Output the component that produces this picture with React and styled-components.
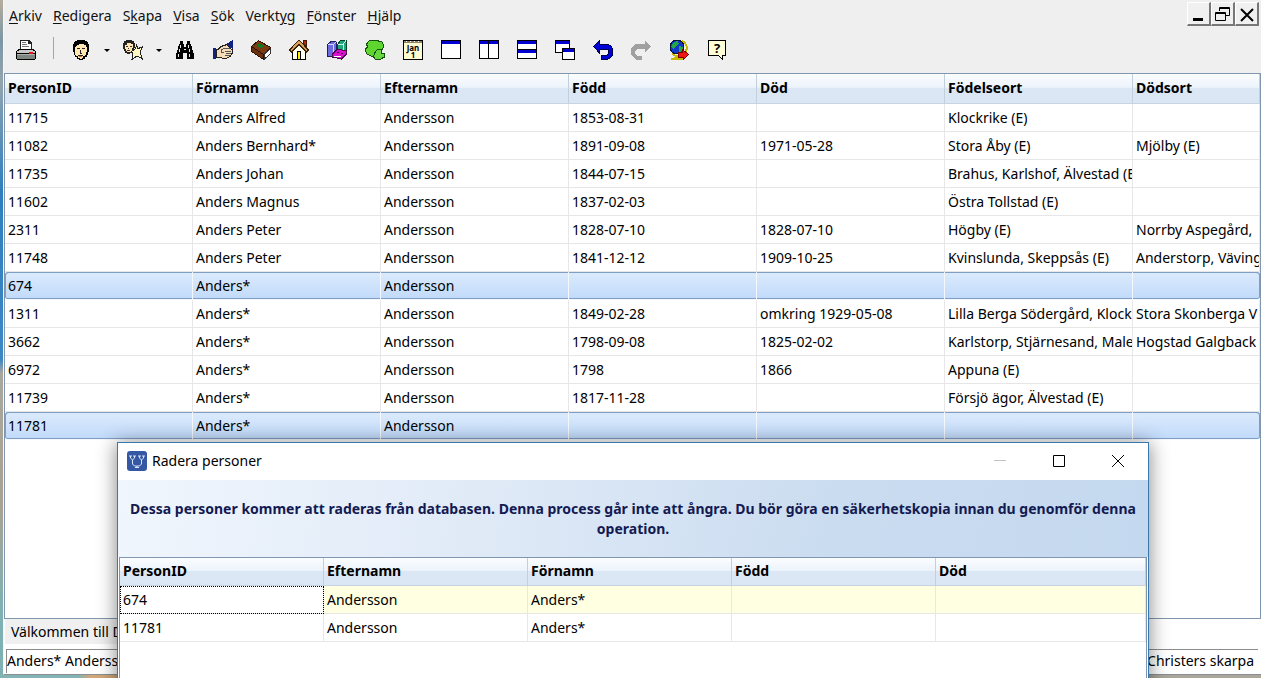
import React from "react";
import styled, { createGlobalStyle } from "styled-components";

const GlobalStyle = createGlobalStyle`
  * {
    box-sizing: border-box;
  }

  body {
    margin: 0;
    overflow: hidden;
    color: #000;
    font-family: "Noto Sans", "Open Sans", sans-serif;
    font-size: 14px;
    line-height: 20px;
  }

  button {
    margin: 0;
    padding: 0;
    border: 0;
    background: none;
    color: inherit;
    font: inherit;
  }
`;

const Desktop = styled.div`
  position: relative;
  height: 100vh;
  overflow: hidden;
  padding: 0 0 3px 3px;
  background:
    linear-gradient(90deg, #83b3b4 0 78px, #d2a679 90px 118px, #a9a69c 130px) bottom / 100% 4px no-repeat,
    linear-gradient(#b5ad9c 0, #7c96a6 6%, #93a4ae 12%, #2f7fc0 28%, #3d87c4 53%, #a9a69c 55%, #a8a294 75%, #7fb0b2 90%);
`;

const Window = styled.div`
  display: flex;
  flex-direction: column;
  height: 100%;
  border-left: 1px solid #f4f6f8;
  border-bottom: 1px solid #8a8f92;
  background: #fff;
`;

const Chrome = styled.header`
  padding-bottom: 5px;
  background: #efefef;
`;

const MenuRow = styled.div`
  display: flex;
  align-items: center;
  justify-content: space-between;
  height: 32px;
  padding: 0 2px 0 5px;
`;

const Menu = styled.nav`
  display: flex;
  gap: 11px;
`;

const MenuButton = styled.button`
  color: #111;

  u {
    text-underline-offset: 2px;
  }
`;

const MdiButtons = styled.div`
  display: flex;
  align-self: flex-start;
  padding-top: 2px;
`;

const MdiButton = styled.button`
  display: flex;
  width: 24px;
  height: 24px;
  padding: 2px 1px;
  border: solid;
  border-width: 1px 2px 2px 1px;
  border-color: #fff #777 #777 #fff;
  background: #f0f0f0;
`;

const Toolbar = styled.div`
  display: flex;
  align-items: center;
  height: 36px;
  padding-left: 3px;
`;

const ToolButton = styled.button`
  display: flex;
  align-items: center;
  justify-content: center;
  width: ${({ $caret }) => ($caret ? "14px" : "38px")};
  height: 32px;
`;

const Separator = styled.div`
  width: 1px;
  height: 22px;
  margin: 0 8px 4px;
  background: #a5a5a5;
`;

const Caret = styled.span`
  border: 3px solid transparent;
  border-top-color: #000;
  border-bottom: 0;
`;

const GridFrame = styled.div`
  flex: 1;
  min-height: 0;
  overflow: hidden;
  border: 1px solid #8096ae;
  background: #fff;
`;

const Grid = styled.table`
  width: 100%;
  table-layout: fixed;
  border-collapse: separate;
  border-spacing: 0;
`;

const HeadCell = styled.th`
  width: ${({ $width }) => ($width ? `${$width}px` : "auto")};
  height: ${({ $height }) => $height}px;
  padding: 0 3px 1px;
  overflow: hidden;
  border-right: 1px solid #c3cfdd;
  border-bottom: 1px solid #c8d4e2;
  background: linear-gradient(#fbfdff 0%, #ecf3fb 46%, #dce7f5 50%, #dbe6f4 100%);
  font-weight: 700;
  text-align: left;
  white-space: nowrap;
`;

const Cell = styled.td`
  height: 28px;
  padding: 0 0 0 3px;
  overflow: hidden;
  border-right: 1px solid #e9e6e9;
  border-bottom: 1px solid #e6e6e6;
  white-space: nowrap;
`;

const Row = styled.tr`
  ${({ $selected }) =>
    $selected &&
    `
    ${Cell} {
      border-color: #f4f7fb;
      background: linear-gradient(#dcebfc, #c1dafb) padding-box;
      box-shadow: inset 0 1px #7f9ec6, inset 0 -1px #7f9ec6;
    }

    ${Cell}:first-child {
      border-radius: 3px 0 0 3px;
      box-shadow: inset 1px 1px #7f9ec6, inset 0 -1px #7f9ec6;
    }

    ${Cell}:last-child {
      border-right: 0;
      border-radius: 0 3px 3px 0;
      box-shadow: inset -1px 1px #7f9ec6, inset 0 -1px #7f9ec6;
    }
  `}

  ${({ $focused }) =>
    $focused &&
    `
    ${Cell} {
      background: #ffffe1;
    }

    ${Cell}:first-child {
      background: #fff;
      outline: 1px dotted #000;
      outline-offset: -1px;
    }
  `}
`;

const StatusTop = styled.div`
  display: flex;
  height: 30px;
  padding: 0 0 5px 1px;
`;

const StatusMessage = styled.div`
  width: 400px;
  padding: 3px 6px;
  background: #f0f0f0;
`;

const StatusBottom = styled.div`
  display: flex;
  justify-content: space-between;
  height: 24px;
  margin: 0 3px 1px 2px;
  padding: 1px 4px 0 0;
  border-top: 1px solid #8b8b8b;
  border-left: 1px solid #8b8b8b;
`;

const Dialog = styled.section`
  position: absolute;
  top: 442px;
  right: 112px;
  bottom: -60px;
  left: 117px;
  display: flex;
  flex-direction: column;
  border: 1px solid #3779ad;
  background: #fff;
  box-shadow: 0 2px 18px 1px rgba(0, 0, 0, 0.45);
`;

const TitleBar = styled.header`
  display: flex;
  align-items: center;
  height: 37px;
  padding: 0 1px 1px 9px;
`;

const Title = styled.h1`
  flex: 1;
  margin: 0 0 0 5px;
  font-size: 14px;
  font-weight: 400;
`;

const CaptionButton = styled.button`
  display: flex;
  align-items: center;
  justify-content: center;
  width: 59px;
  height: 36px;
  color: ${({ disabled }) => (disabled ? "#c4c4c4" : "#000")};
`;

const Warning = styled.p`
  margin: 0;
  padding: 19px 8px 18px;
  background: linear-gradient(100deg, #f0f6fd 0%, #e0eaf7 35%, #cadcf0 70%, #c4d8ef 100%);
  color: #131a52;
  font-weight: 700;
  text-align: center;
`;

const DialogGrid = styled.div`
  display: flex;
  flex: 1;
  padding: 0 1px;
`;

const columns = ["PersonID", "Förnamn", "Efternamn", "Född", "Död", "Födelseort", "Dödsort"];

const persons = [
  ["11715", "Anders Alfred", "Andersson", "1853-08-31", "", "Klockrike (E)", ""],
  ["11082", "Anders Bernhard*", "Andersson", "1891-09-08", "1971-05-28", "Stora Åby (E)", "Mjölby (E)"],
  ["11735", "Anders Johan", "Andersson", "1844-07-15", "", "Brahus, Karlshof, Älvestad (E", ""],
  ["11602", "Anders Magnus", "Andersson", "1837-02-03", "", "Östra Tollstad (E)", ""],
  ["2311", "Anders Peter", "Andersson", "1828-07-10", "1828-07-10", "Högby (E)", "Norrby Aspegård,"],
  ["11748", "Anders Peter", "Andersson", "1841-12-12", "1909-10-25", "Kvinslunda, Skeppsås (E)", "Anderstorp, Väving"],
  ["674", "Anders*", "Andersson", "", "", "", ""],
  ["1311", "Anders*", "Andersson", "1849-02-28", "omkring 1929-05-08", "Lilla Berga Södergård, Klock", "Stora Skonberga V"],
  ["3662", "Anders*", "Andersson", "1798-09-08", "1825-02-02", "Karlstorp, Stjärnesand, Male", "Hogstad Galgback"],
  ["6972", "Anders*", "Andersson", "1798", "1866", "Appuna (E)", ""],
  ["11739", "Anders*", "Andersson", "1817-11-28", "", "Försjö ägor, Älvestad (E)", ""],
  ["11781", "Anders*", "Andersson", "", "", "", ""],
];

const selected = ["674", "11781"];

const deleteColumns = ["PersonID", "Efternamn", "Förnamn", "Född", "Död"];

const deleteRows = [
  ["674", "Andersson", "Anders*", "", ""],
  ["11781", "Andersson", "Anders*", "", ""],
];

// [before, access key, after]
const menus = [
  ["", "A", "rkiv"],
  ["", "R", "edigera"],
  ["S", "k", "apa"],
  ["", "V", "isa"],
  ["", "S", "ök"],
  ["Verkt", "y", "g"],
  ["", "F", "önster"],
  ["", "H", "jälp"],
];

const icons = {
  print: (
    <>
      <path d="M4 9V0h9l3 3v6z" fill="#222" />
      <path d="M5 9V1h7v3h3v5z" fill="#fff" />
      <path d="M6 2h4v1H6zM6 4h5v1H6zM6 6h7v1H6z" fill="#777" />
      <path d="M2 9h16v1h1v1h1v8h-1v1H1v-1H0v-8h1v-1h1z" fill="#000" />
      <path d="M3 10h14v1h2v2H1v-2h2z" fill="#c8c8c8" />
      <path d="M1 14h18v1H1z" fill="#aab2ae" />
      <path d="M1 15h18v4H1z" fill="#7d8782" />
      <path d="M13 12h4v2h-4z" fill="#e8141c" />
    </>
  ),
  face: (
    <>
      <path d="M6 0h8v1h2v1h1v2h1v8h-1v3h-1v2h-2v2h-2v1H8v-1H6v-2H4v-2H3v-3H2V4h1V2h1V1h2z" fill="#000" />
      <path d="M6 5h2V4h5v1h2v2h1v5h-1v3h-1v1h-2v2h-1v1H9v-1H7v-2H5v-1H4V7h1V6h1z" fill="#ffe6b4" />
      <path d="M6 8h3v1H6zM11 8h3v1h-3zM9 10h1v3h1v1H9zM7 15h5v1H7z" fill="#222" />
      <path d="M8 16h3v1H8z" fill="#c46a4a" />
    </>
  ),
  faceStar: (
    <>
      <path d="M13.500 5.500l1.500 3 4.500-1.500-2.500 5 2.500 7-5.500-3-5 3.500 1-6-3-4 5-.5z" fill="#fff8c4" stroke="#222" />
      <path d="M3 0h6v1h2v2h1v5h-1v3H9v2H7v1H4v-1H2v-2H1V9H0V3h1V1h2z" fill="#222" />
      <path d="M4 3h4v1h2v4H9v3H8v1H4v-1H3V9H2V5h2z" fill="#ffe6b4" />
      <path d="M3 6h2v1H3zM7 6h2v1H7zM5 8h1v1H5zM4 10h3v1H4z" fill="#333" />
    </>
  ),
  binoculars: (
    <>
      <path d="M5 1h3v3h1v3h2V4h1V1h3v3h1v2h1v4h1v3h1v6h-7v-6H8v6H1v-6h1v-3h1V6h1V4h1z" fill="#000" />
      <path d="M5 5h1v3H5zM4 9h1v3H4zM3 14h1v3H3zM13 5h1v3h-1zM14 9h1v3h-1zM14 14h1v3h-1zM9 9h2v1H9z" fill="#e8e8e8" />
    </>
  ),
  hand: (
    <>
      <path d="M20 0v9l-3-1-4-4z" fill="#10247f" />
      <path d="M0 8h3v11H0z" fill="#10247f" />
      <path d="M3 9.500h2l3-3 6-2 3 4 2 1v4l-2 3-3 1.500H9L7 17l-3 1z" fill="#f6dcb8" stroke="#222" />
      <path d="M8 10l4-2 5 1M12 11.500h6M13 13.500h5M12 15.500h5M8 10v2h3" stroke="#555" fill="none" />
    </>
  ),
  book: (
    <>
      <path d="M.5 6.500L7.500.5l12 7-7 7z" fill="#7a3a12" stroke="#2a1204" />
      <path d="M.5 6.500l12 8v5l-12-8z" fill="#6a300c" stroke="#2a1204" />
      <path d="M13 14.500l6.500-6v5l-6.500 6z" fill="#fff" stroke="#333" />
      <path d="M7 4h3v1h3v2h-2v1H9V7H7z" fill="#0b7a22" />
    </>
  ),
  house: (
    <>
      <path d="M3.500 10L10 4l6.500 6v9.500h-13z" fill="#fffff0" stroke="#000" />
      <path d="M14 0h3v6l-3-3z" fill="#b02a10" stroke="#4a1505" />
      <path d="M.5 10L9.500.5h1l9 9.500-2 2L10 4.500 2.500 12z" fill="#d7a05a" stroke="#3b2108" />
      <path d="M8.500 19.500v-8h3v8z" fill="#fff000" stroke="#000" />
    </>
  ),
  books: (
    <>
      <path d="M.5 4.500L4 1.500h5.500v12l-3 3h-6z" fill="#6c6ce0" stroke="#20205c" />
      <path d="M1 4.500h5.500l3-3M6.500 5v11" stroke="#d5d5ff" fill="none" />
      <path d="M10.500 4.500l3-4h5.500v11l-3 4h-5.500z" fill="#1fa77a" stroke="#07402f" />
      <path d="M11 4.500h5l3-4M16 5v9" stroke="#caf5e2" fill="none" />
      <path d="M5.500 14l5-5 9 2v3l-5 5-9-2z" fill="#d911cf" stroke="#4d0849" />
      <path d="M7 16.500h7" stroke="#fff" fill="none" />
      <path d="M10 12.500h2M14 13.500h2" stroke="#4d0849" />
    </>
  ),
  map: (
    <>
      <path d="M4.500.5h8l2 1h2l2 3v3l-2 3v3l-3 3-5 1-3-2-3-1-2-3V9l2-2-1-3z" fill="#5fd62f" stroke="#14500c" />
      <path d="M10.500 11.500l3-2.500h3v4l3 1v3l-2 1-2 1.500h-5l-2-3 1-3z" fill="#67d93f" stroke="#14500c" />
    </>
  ),
  calendar: (
    <>
      <path d="M.5 .5h19v19H.5z" fill="#fffbd0" stroke="#000" />
      <path d="M1 1h18v2H1z" fill="#8f8266" />
      <path d="M3 1h1v1H3zM7 1h1v1H7zM11 1h1v1h-1zM15 1h1v1h-1z" fill="#fff" />
      <text x="10" y="11" fontSize="8" fontWeight="700" textAnchor="middle" fill="#000">
        Jan
        <tspan x="10" dy="7">1</tspan>
      </text>
    </>
  ),
  single: (
    <>
      <path d="M.5 .5h19v18H.5z" fill="#fff" stroke="#000" />
      <path d="M1 1h18v3H1z" fill="#0000d0" />
    </>
  ),
  columns: (
    <>
      <path d="M.5 .5h19v18H.5z" fill="#fff" stroke="#000" />
      <path d="M1 1h18v3H1z" fill="#0000d0" />
      <path d="M9 1h1v18H9z" fill="#000" />
    </>
  ),
  rows: (
    <>
      <path d="M.5 .5h19v18H.5z" fill="#fff" stroke="#000" />
      <path d="M1 1h18v3H1zM1 10h18v3H1z" fill="#0000d0" />
      <path d="M1 9h18v1H1z" fill="#000" />
    </>
  ),
  cascade: (
    <>
      <path d="M.5 .5h14v12H.5z" fill="#fff" stroke="#000" />
      <path d="M1 1h13v3H1z" fill="#0000d0" />
      <path d="M7.500 8.500h12v11h-12z" fill="#fff" stroke="#000" />
      <path d="M8 9h11v3H8z" fill="#0000d0" />
    </>
  ),
  undo: (
    <path
      d="M.5 6.500l6-6v4h8l3 1 2 3v7l-3 3-3 1h-5v-4h5l2-2V10l-1-1h-8v4z"
      fill="#0000d8"
      stroke="#000048"
    />
  ),
  redo: <path d="M20 6.500L14 1v3H5L2 6 0 9v6l3 3 3 2h5v-4H6l-2-2v-3l2-2h8v4z" fill="#a0a0a0" />,
  globe: (
    <>
      <path d="M13 1l3 2 2 4-1 5-3 3-5 1v2h4v2H3v-1l4-1v-2l-4-2" fill="none" stroke="#c9b800" strokeWidth="2" />
      <circle cx="8" cy="7" r="7" fill="#1238c8" stroke="#0a1240" />
      <path d="M5 2l4-1 1 3-3 2-2 3-3-2zM10 6l4 1-1 4-3 1z" fill="#25a54a" />
      <path d="M9.500 12h4V9.500l6 5-5 5V17h-5z" fill="#f01414" stroke="#7c0000" />
    </>
  ),
  help: (
    <>
      <path d="M1.500.5h17v15l-3 .5v3.500l-4-4h-10z" fill="#ffffd8" stroke="#000" />
      <text x="10" y="13" fontSize="13" fontWeight="700" textAnchor="middle" fill="#000">
        ?
      </text>
    </>
  ),
};

const tools = [
  ["binoculars", "Sök person"],
  ["hand", "Ansedel"],
  ["book", "Källor"],
  ["house", "Orter"],
  ["books", "Arkiv"],
  ["map", "Karta"],
  ["calendar", "Kalender"],
  ["single", "Ett fönster"],
  ["columns", "Dela lodrätt"],
  ["rows", "Dela vågrätt"],
  ["cascade", "Överlappande"],
  ["undo", "Ångra"],
  ["redo", "Gör om"],
  ["globe", "Internet"],
  ["help", "Hjälp"],
];

function Icon({ name }) {
  return (
    <svg width="20" height="20" viewBox="0 0 20 20" fill="none" shapeRendering="crispEdges" aria-hidden="true">
      {icons[name]}
    </svg>
  );
}

function Glyph({ size, children }) {
  return (
    <svg width={size} height={size} viewBox={`0 0 ${size} ${size}`} fill="none" stroke="currentColor" aria-hidden="true">
      {children}
    </svg>
  );
}

function DataGrid({ columns, rows, width, headHeight, selected = [], focused }) {
  return (
    <Grid>
      <thead>
        <tr>
          {columns.map((name, index) => (
            <HeadCell
              key={name}
              scope="col"
              $height={headHeight}
              $width={index < columns.length - 1 ? width : null}
            >
              {name}
            </HeadCell>
          ))}
        </tr>
      </thead>
      <tbody>
        {rows.map((row) => (
          <Row key={row[0]} $selected={selected.includes(row[0])} $focused={focused === row[0]}>
            {row.map((value, index) => (
              <Cell key={index}>{value}</Cell>
            ))}
          </Row>
        ))}
      </tbody>
    </Grid>
  );
}

function DeleteDialog() {
  return (
    <Dialog role="dialog" aria-labelledby="dialog-title">
      <TitleBar>
        <Glyph size={20}>
          <rect width="20" height="20" rx="3" fill="#3558a5" stroke="none" />
          <path d="M3.500 5v2l2 2 2-2V5M12.500 5v2l2 2 2-2V5M5.500 9v4l2 2h5l2-2V9M10 15v2" stroke="#dce6fa" />
          <path d="M2 5h3M6 5h3M11 5h3M15 5h3M8 16.500h4" stroke="#dce6fa" />
        </Glyph>
        <Title id="dialog-title">Radera personer</Title>
        <CaptionButton disabled aria-label="Minimera">
          <Glyph size={12}>
            <path d="M0 5.500h12" />
          </Glyph>
        </CaptionButton>
        <CaptionButton aria-label="Maximera">
          <Glyph size={12}>
            <path d="M.5.500h11v11H.5z" />
          </Glyph>
        </CaptionButton>
        <CaptionButton aria-label="Stäng">
          <Glyph size={12}>
            <path d="M0 0l12 12M12 0L0 12" />
          </Glyph>
        </CaptionButton>
      </TitleBar>
      <Warning>
        Dessa personer kommer att raderas från databasen. Denna process går inte att ångra. Du bör
        göra en säkerhetskopia innan du genomför denna operation.
      </Warning>
      <DialogGrid>
        <GridFrame>
          <DataGrid columns={deleteColumns} rows={deleteRows} width={204} headHeight={28} focused="674" />
        </GridFrame>
      </DialogGrid>
    </Dialog>
  );
}

function App() {
  return (
    <Desktop>
      <GlobalStyle />
      <Window>
        <Chrome>
          <MenuRow>
            <Menu>
              {menus.map(([before, accessKey, after]) => (
                <MenuButton key={before + accessKey + after}>
                  {before}
                  <u>{accessKey}</u>
                  {after}
                </MenuButton>
              ))}
            </Menu>
            <MdiButtons>
              <MdiButton aria-label="Minimera fönster">
                <Glyph size={19}>
                  <path d="M4 14.500h10" stroke="#000" strokeWidth="3" />
                </Glyph>
              </MdiButton>
              <MdiButton aria-label="Återställ fönster">
                <Glyph size={19}>
                  <path d="M6.500 6V2.500h10v8H13M6 3.500h11" stroke="#000" />
                  <path d="M2.500 7.500h10v8h-10zM2 8.500h11" stroke="#000" />
                </Glyph>
              </MdiButton>
              <MdiButton aria-label="Stäng fönster">
                <Glyph size={19}>
                  <path d="M4 4l12 12M16 4L4 16" stroke="#000" strokeWidth="2" />
                </Glyph>
              </MdiButton>
            </MdiButtons>
          </MenuRow>
          <Toolbar>
            <ToolButton aria-label="Skriv ut">
              <Icon name="print" />
            </ToolButton>
            <Separator />
            <ToolButton aria-label="Ny person">
              <Icon name="face" />
            </ToolButton>
            <ToolButton $caret aria-label="Fler personval">
              <Caret />
            </ToolButton>
            <ToolButton aria-label="Favoriter">
              <Icon name="faceStar" />
            </ToolButton>
            <ToolButton $caret aria-label="Fler favoriter">
              <Caret />
            </ToolButton>
            {tools.map(([name, label]) => (
              <ToolButton key={name} aria-label={label} disabled={name === "redo"}>
                <Icon name={name} />
              </ToolButton>
            ))}
          </Toolbar>
        </Chrome>
        <GridFrame>
          <DataGrid columns={columns} rows={persons} width={188} headHeight={30} selected={selected} />
        </GridFrame>
        <StatusTop>
          <StatusMessage>Välkommen till D</StatusMessage>
        </StatusTop>
        <StatusBottom>
          <span>Anders* Andersson</span>
          <span>\Christers skarpa</span>
        </StatusBottom>
      </Window>
      <DeleteDialog />
    </Desktop>
  );
}

export default App;
